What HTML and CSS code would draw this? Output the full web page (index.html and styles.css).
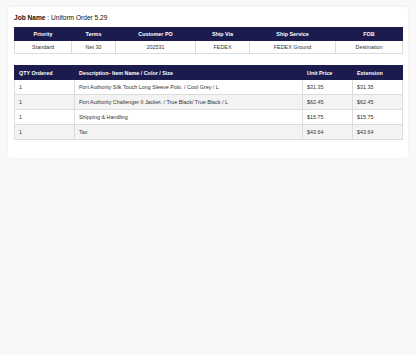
FILE: index.html
```html
<!DOCTYPE html>
<html>
<head>
<meta charset="utf-8">
<link rel="stylesheet" href="styles.css">
</head>
<body>
<div class="card">
  <div class="title"><b>Job Name</b> : Uniform Order 5.29</div>
  <table class="tbl center">
    <colgroup><col style="width:57px"><col style="width:44px"><col style="width:80px"><col style="width:54px"><col style="width:86px"><col style="width:67px"></colgroup>
    <thead>
      <tr><th>Priority</th><th>Terms</th><th>Customer PO</th><th>Ship Via</th><th>Ship Service</th><th>FOB</th></tr>
    </thead>
    <tbody>
      <tr><td>Standard</td><td>Net 30</td><td>202531</td><td>FEDEX</td><td>FEDEX Ground</td><td>Destination</td></tr>
    </tbody>
  </table>
  <table class="tbl items">
    <colgroup><col style="width:60px"><col style="width:228px"><col style="width:50px"><col style="width:50px"></colgroup>
    <thead>
      <tr><th>QTY Ordered</th><th>Description- Item Name / Color / Size</th><th>Unit Price</th><th>Extension</th></tr>
    </thead>
    <tbody>
      <tr><td>1</td><td>Port Authority Silk Touch Long Sleeve Polo. / Cool Grey / L</td><td>$31.35</td><td>$31.35</td></tr>
      <tr><td>1</td><td>Port Authority Challenger II Jacket. / True Black/ True Black / L</td><td>$62.45</td><td>$62.45</td></tr>
      <tr><td>1</td><td>Shipping &amp; Handling</td><td>$15.75</td><td>$15.75</td></tr>
      <tr><td>1</td><td>Tax</td><td>$43.64</td><td>$43.64</td></tr>
    </tbody>
  </table>
</div>
</body>
</html>
```
FILE: styles.css
```css
html, body {
  margin: 0;
  padding: 0;
  background: #f8f8f8;
  font-family: "Liberation Sans", Arial, sans-serif;
  color: #222;
}
body {
  padding: 7px 8px;
}
.card {
  background: #fff;
  border-radius: 4px;
  box-shadow: 0 0 3px rgba(0,0,0,0.06);
  padding: 6px 6px 18px;
}
.title {
  font-size: 6.6px;
  line-height: 9px;
  margin-bottom: 5px;
  color: #111;
}
.title b {
  font-weight: bold;
}
.tbl {
  width: 388px;
  table-layout: fixed;
  border-collapse: collapse;
  font-size: 5.4px;
}
.tbl th {
  background: #1c1b4e;
  color: #fff;
  font-weight: bold;
  height: 12px;
  padding: 0 4px;
  border: 1px solid #1c1b4e;
}
.tbl td {
  height: 12px;
  padding: 0 4px;
  border: 1px solid #dcdcdc;
  color: #333;
}
.center th, .center td {
  text-align: center;
}
.items {
  margin-top: 11px;
}
.items th {
  text-align: left;
  height: 13px;
}
.items td {
  text-align: left;
  height: 14px;
}
.items tbody tr:nth-child(even) td {
  background: #f3f3f3;
}
```
